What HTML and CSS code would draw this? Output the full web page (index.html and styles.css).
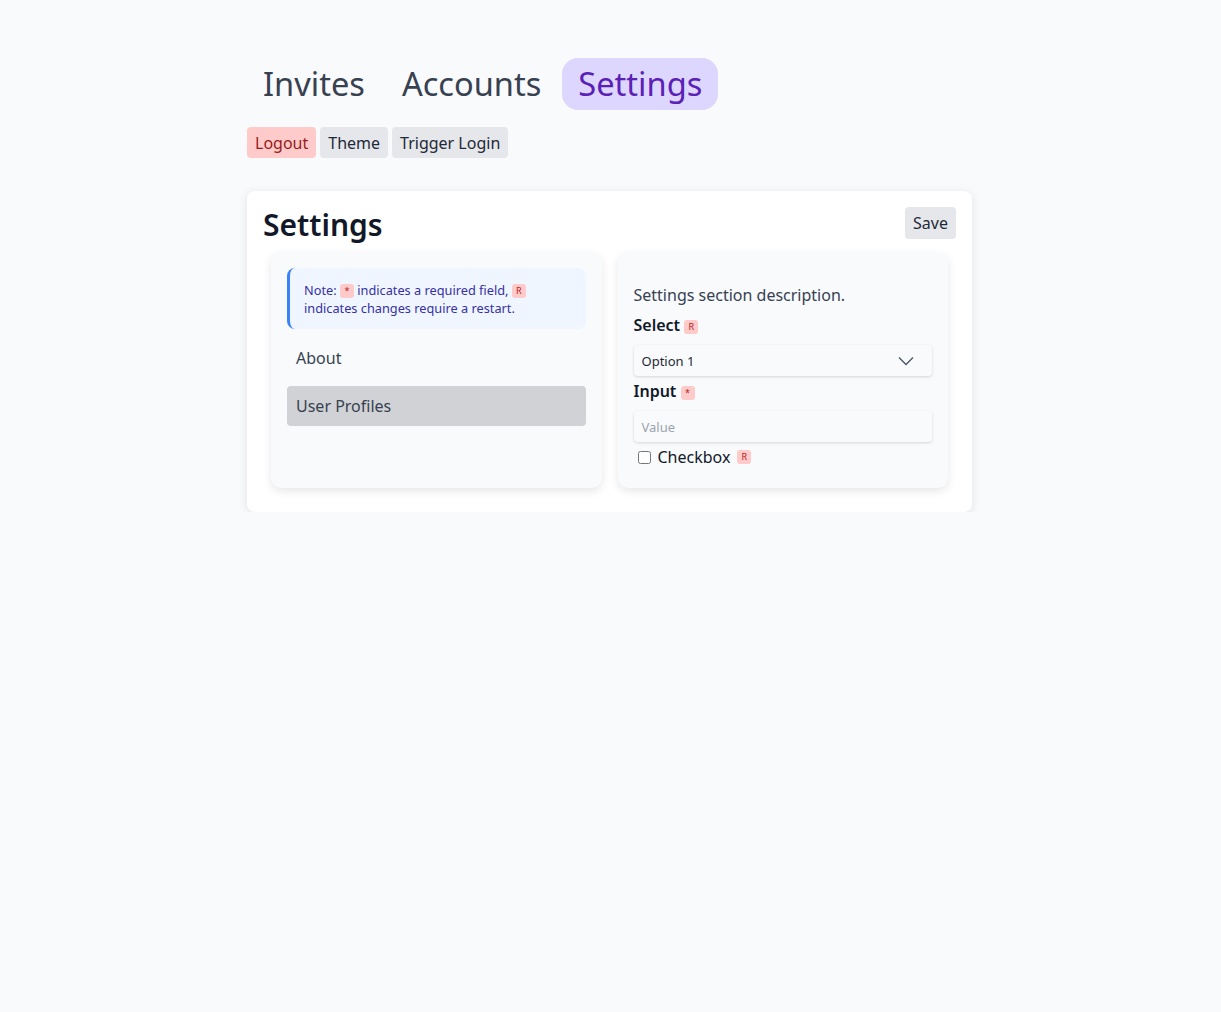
FILE: index.html
```html
<!DOCTYPE html>
<html lang="en">
<head>
<meta charset="utf-8">
<title>Settings</title>
<link rel="stylesheet" href="styles.css">
</head>
<body>
<div class="page">
  <nav class="tabs">
    <a class="tab">Invites</a>
    <a class="tab">Accounts</a>
    <a class="tab active">Settings</a>
  </nav>
  <div class="actions">
    <button class="btn btn-red">Logout</button>
    <button class="btn">Theme</button>
    <button class="btn">Trigger Login</button>
  </div>
  <section class="card">
    <header class="card-head">
      <h1 class="title">Settings</h1>
      <button class="btn save">Save</button>
    </header>
    <div class="panels">
      <div class="panel">
        <div class="note">Note: <span class="badge">*</span> indicates a required field, <span class="badge">R</span> indicates changes require a restart.</div>
        <ul class="menu">
          <li class="menu-item">About</li>
          <li class="menu-item selected">User Profiles</li>
        </ul>
      </div>
      <div class="panel form">
        <p class="desc">Settings section description.</p>
        <label class="label">Select <span class="badge">R</span></label>
        <div class="select">
          <span>Option 1</span>
          <svg class="chev" width="16" height="10" viewBox="0 0 16 10"><path d="M1 1.5 L8 8.5 L15 1.5" fill="none" stroke="#4b5563" stroke-width="1.3"/></svg>
        </div>
        <label class="label second">Input <span class="badge">*</span></label>
        <div class="input"><span class="placeholder">Value</span></div>
        <label class="check"><input type="checkbox"> Checkbox <span class="badge">R</span></label>
      </div>
    </div>
  </section>
</div>
</body>
</html>
```
FILE: styles.css
```css
* { box-sizing: border-box; }
html, body { margin: 0; padding: 0; }
body {
  background: #f9fafb;
  font-family: "Noto Sans", "Open Sans", sans-serif;
  color: #374151;
  padding-right: 2px;
}
.page {
  width: 725px;
  margin: 0 auto;
  padding-top: 58px;
}
.tabs {
  display: flex;
  gap: 5px;
}
.tab {
  font-size: 32.6px;
  line-height: 40px;
  padding: 6px 16px;
  border-radius: 16px;
  color: #374151;
}
.tab.active {
  background: #ddd6fe;
  color: #5b21b6;
}
.actions {
  display: flex;
  gap: 4px;
  margin-top: 17px;
}
.btn {
  font-family: inherit;
  font-size: 16px;
  line-height: 26px;
  padding: 3px 8px 2px;
  border: 0;
  border-radius: 4px;
  background: #e5e7eb;
  color: #1f2937;
}
.btn-red {
  background: #fecaca;
  color: #991b1b;
}
.card {
  margin-top: 33px;
  background: #fff;
  border-radius: 8px;
  box-shadow: 0 2px 10px rgba(0,0,0,0.10);
  padding: 16px;
}
.card-head {
  display: flex;
  justify-content: space-between;
  align-items: flex-start;
}
.title {
  margin: 0;
  font-size: 30px;
  line-height: 36px;
  font-weight: 600;
  color: #111827;
}
.save { padding: 3px 8px 3px; }
.panels {
  display: grid;
  grid-template-columns: 1fr 1fr;
  gap: 16px;
  padding: 10px 8px 8px;
}
.panel {
  background: #f8fafc;
  border-radius: 10px;
  box-shadow: 0 3px 10px rgba(0,0,0,0.10);
  padding: 15px 16px 19px;
}
.note {
  background: #eff6ff;
  border-left: 3px solid #3b82f6;
  border-radius: 8px;
  padding: 13px 14px 12px;
  font-size: 12.75px;
  line-height: 18px;
  color: #3730a3;
}
.badge {
  display: inline-block;
  background: #fecaca;
  color: #b91c1c;
  font-size: 9px;
  line-height: 14px;
  min-width: 14px;
  text-align: center;
  padding: 0 3px;
  border-radius: 3px;
  vertical-align: 1px;
  font-weight: 400;
}
.menu {
  list-style: none;
  margin: 9px 0 0;
  padding: 0;
  display: flex;
  flex-direction: column;
  gap: 8px;
}
.menu-item {
  height: 40px;
  line-height: 40px;
  padding: 0 9px;
  border-radius: 4px;
  font-size: 16px;
  color: #374151;
}
.menu-item.selected { background: #d1d2d6; }
.form {
  display: flex;
  flex-direction: column;
}
.desc {
  margin: 15px 0 0;
  font-size: 16px;
  line-height: 24px;
  color: #374151;
}
.label {
  margin-top: 6px;
  font-size: 16px;
  line-height: 24px;
  font-weight: 600;
  color: #111827;
}
.label.second { margin-top: 3px; }
.select, .input {
  margin-top: 8px;
  height: 31px;
  border-radius: 4px;
  background: #f8fafc;
  box-shadow: 0 1px 3px rgba(0,0,0,0.15);
  display: flex;
  align-items: center;
  justify-content: space-between;
  padding: 0 18px 0 8px;
  font-size: 13px;
  color: #1f2937;
}
.placeholder { color: #9ca3af; }
.check {
  margin-top: 3px;
  font-size: 16px;
  line-height: 24px;
  color: #111827;
  display: flex;
  align-items: center;
  gap: 7px;
}
.check input { margin: 0 0 0 4px; width: 13px; height: 13px; }
.check .badge { vertical-align: 0; }
```
